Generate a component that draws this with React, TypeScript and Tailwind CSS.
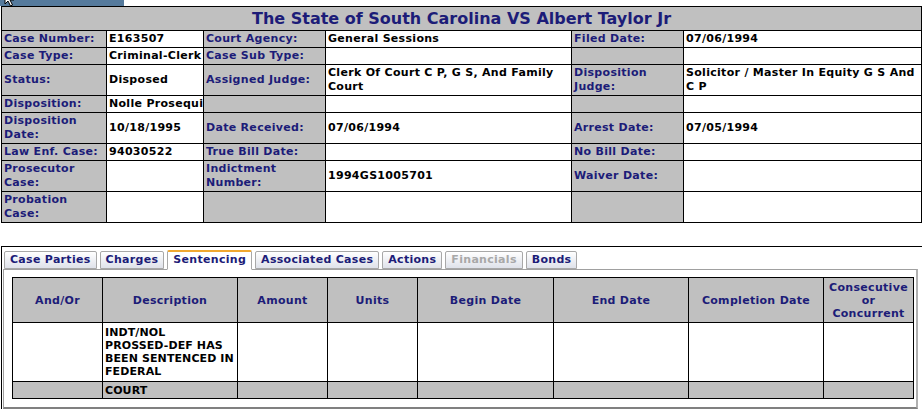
import React from 'react';

const FONT = "font-['DejaVu_Sans',Verdana,sans-serif]";

type Cell = { text?: string; label?: boolean };

const caseRows: Cell[][] = [
  [
    { text: 'Case Number:', label: true },
    { text: 'E163507' },
    { text: 'Court Agency:', label: true },
    { text: 'General Sessions' },
    { text: 'Filed Date:', label: true },
    { text: '07/06/1994' },
  ],
  [
    { text: 'Case Type:', label: true },
    { text: 'Criminal-Clerk' },
    { text: 'Case Sub Type:', label: true },
    { text: '' },
    { label: true },
    { text: '' },
  ],
  [
    { text: 'Status:', label: true },
    { text: 'Disposed' },
    { text: 'Assigned Judge:', label: true },
    { text: 'Clerk Of Court C P, G S, And Family\nCourt' },
    { text: 'Disposition\nJudge:', label: true },
    { text: 'Solicitor / Master In Equity G S And\nC P' },
  ],
  [
    { text: 'Disposition:', label: true },
    { text: 'Nolle Prosequi' },
    { label: true },
    { text: '' },
    { label: true },
    { text: '' },
  ],
  [
    { text: 'Disposition\nDate:', label: true },
    { text: '10/18/1995' },
    { text: 'Date Received:', label: true },
    { text: '07/06/1994' },
    { text: 'Arrest Date:', label: true },
    { text: '07/05/1994' },
  ],
  [
    { text: 'Law Enf. Case:', label: true },
    { text: '94030522' },
    { text: 'True Bill Date:', label: true },
    { text: '' },
    { text: 'No Bill Date:', label: true },
    { text: '' },
  ],
  [
    { text: 'Prosecutor\nCase:', label: true },
    { text: '' },
    { text: 'Indictment\nNumber:', label: true },
    { text: '1994GS1005701' },
    { text: 'Waiver Date:', label: true },
    { text: '' },
  ],
  [
    { text: 'Probation\nCase:', label: true },
    { text: '' },
    { label: true },
    { text: '' },
    { label: true },
    { text: '' },
  ],
];

const tabs = [
  { name: 'Case Parties' },
  { name: 'Charges' },
  { name: 'Sentencing', active: true },
  { name: 'Associated Cases' },
  { name: 'Actions' },
  { name: 'Financials', disabled: true },
  { name: 'Bonds' },
];

const sentCols = [
  { name: 'And/Or', w: 'w-[90px]' },
  { name: 'Description', w: 'w-[135px]' },
  { name: 'Amount', w: 'w-[90px]' },
  { name: 'Units', w: 'w-[90px]' },
  { name: 'Begin Date', w: 'w-[136px]' },
  { name: 'End Date', w: 'w-[135px]' },
  { name: 'Completion Date', w: 'w-[135px]' },
  { name: 'Consecutive or Concurrent', w: 'w-[90px]' },
];

const CaseTable = () => (
  <table className="w-[920px] ml-[1px] table-fixed border-collapse border border-black text-[11px] leading-[14px] tracking-[0.3px] font-bold">
    <colgroup>
      <col className="w-[105px]" />
      <col className="w-[97px]" />
      <col className="w-[122px]" />
      <col className="w-[246px]" />
      <col className="w-[112px]" />
      <col className="w-[238px]" />
    </colgroup>
    <tbody>
      <tr>
        <td colSpan={6} className="h-[24px] bg-[#c0c0c0] border border-black text-center text-[16px] leading-[20px] tracking-normal text-[#1c1c78]">
          The State of South Carolina VS Albert Taylor Jr
        </td>
      </tr>
      {caseRows.map((row, i) => (
        <tr key={i}>
          {row.map((c, j) => (
            <td
              key={j}
              className={
                c.label
                  ? 'h-[17px] bg-[#c0c0c0] text-[#1c1c78] border border-black pl-[2px] pr-[1px] py-[1px] align-middle whitespace-pre overflow-hidden'
                  : 'h-[17px] bg-white text-black border border-black pl-[2px] pr-[1px] py-[1px] align-middle whitespace-pre overflow-hidden'
              }
            >
              {c.text}
            </td>
          ))}
        </tr>
      ))}
    </tbody>
  </table>
);

const Tabs = () => (
  <div className="flex items-end gap-[3px] pl-[2px] h-[20px]">
    {tabs.map((t) => (
      <div
        key={t.name}
        className={
          t.active
            ? 'h-[20px] px-[5px] bg-white border border-[#a8a8a8] border-t-2 border-t-[#f0a830] border-b-white rounded-t-[2px] text-[#1c1c78] leading-[16px] -mb-[1px] relative z-10'
            : `h-[18px] px-[5px] bg-gradient-to-b from-white to-[#dfe2ea] border border-[#a8a8a8] rounded-t-[2px] leading-[16px] ${
                t.disabled ? 'text-[#a8a8a8]' : 'text-[#1c1c78]'
              }`
        }
      >
        {t.name}
      </div>
    ))}
  </div>
);

const SentencingTable = () => (
  <table className="w-[902px] table-fixed border-collapse border border-black text-[11px] leading-[13px] font-bold">
    <colgroup>
      {sentCols.map((c) => (
        <col key={c.name} className={c.w} />
      ))}
    </colgroup>
    <thead>
      <tr>
        {sentCols.map((c) => (
          <th key={c.name} className="h-[45px] bg-[#c0c0c0] text-[#1c1c78] border border-black px-[2px] text-center align-middle font-bold">
            {c.name === 'Consecutive or Concurrent' ? (
              <>
                Consecutive
                <br />
                or
                <br />
                Concurrent
              </>
            ) : (
              c.name
            )}
          </th>
        ))}
      </tr>
    </thead>
    <tbody className="tracking-[0.1px]">
      <tr>
        {sentCols.map((c, j) => (
          <td key={c.name} className="h-[59px] bg-white text-black border border-black px-[2px] align-top pt-[3px] whitespace-pre overflow-hidden">
            {j === 1 ? 'INDT/NOL\nPROSSED-DEF HAS\nBEEN SENTENCED IN\nFEDERAL' : null}
          </td>
        ))}
      </tr>
      <tr>
        {sentCols.map((c, j) => (
          <td key={c.name} className="h-[17px] bg-[#c0c0c0] text-black border border-black px-[2px] align-middle">
            {j === 1 ? 'COURT' : null}
          </td>
        ))}
      </tr>
    </tbody>
  </table>
);

export default function App() {
  return (
    <div className={`${FONT} w-[922px] h-[417px] bg-white relative overflow-hidden`}>
      <div className="h-[6px] w-[124px] bg-[#557a9c]" />
      <svg className="absolute left-[4px] top-[-9px]" width="14" height="16" viewBox="0 0 14 16">
        <path d="M1 1 L1 13 L4 10 L6.5 15 L8.5 14 L6 9 L10 9 Z" fill="white" stroke="black" strokeWidth="1" />
      </svg>
      <CaseTable />
      <div className="mt-[23px] ml-[1px] w-[921px] border-t border-l border-black pt-[2px] text-[11px] tracking-[0.3px] font-bold">
        <Tabs />
        <div className="ml-[1px] w-[915px] h-[140px] border border-[#a0a0a0] border-b-2 border-r-2 border-b-[#808080] border-r-[#b0b0b0] bg-white pt-[7px] pl-[8px]">
          <SentencingTable />
        </div>
      </div>
    </div>
  );
}
